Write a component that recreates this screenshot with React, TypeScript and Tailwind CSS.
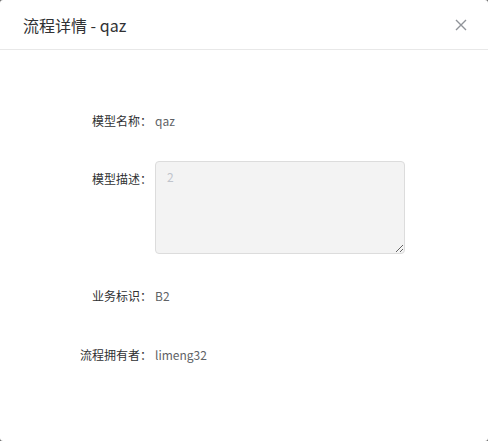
const FONT = '"Microsoft YaHei", "Noto Sans CJK SC", "Noto Sans", sans-serif'

const rows = [
  { label: '模型名称：', value: 'qaz' },
  { label: '业务标识：', value: 'B2' },
  { label: '流程拥有者：', value: 'limeng32' },
]

const CloseIcon = () => (
  <svg width="12" height="12" viewBox="0 0 12 12" fill="none">
    <path d="M1 1L11 11M11 1L1 11" stroke="#909399" strokeWidth="1.4" />
  </svg>
)

export default function App() {
  return (
    <div className="h-[441px] w-[488px] bg-[#6b6b6b]" style={{ fontFamily: FONT }}>
      <div className="flex h-full w-full flex-col rounded-[3px] bg-white">
        <div className="flex h-[50px] shrink-0 items-center justify-between border-b border-[#e8e8e8] pl-[23px] pr-[17px]">
          <span className="text-[16px] leading-6 text-[#303133]">流程详情 - qaz</span>
          <button className="flex h-5 w-5 items-center justify-center">
            <CloseIcon />
          </button>
        </div>

        <div className="flex flex-col pt-[61px] text-[12px] leading-5">
          <div className="flex">
            <div className="w-[152px] shrink-0 text-right text-[#303133]">{rows[0].label}</div>
            <div className="ml-[3px] text-[#606266]">{rows[0].value}</div>
          </div>

          <div className="mt-[30px] flex">
            <div className="w-[152px] shrink-0 pt-[8px] text-right text-[#303133]">模型描述：</div>
            <textarea
              readOnly
              value="2"
              className="ml-[3px] h-[93px] w-[250px] resize rounded-[4px] border border-[#dcdcdc] bg-[#f3f3f3] px-[11px] py-[5px] text-[12px] leading-5 text-[#c0c4cc] outline-none"
            />
          </div>

          <div className="mt-[32px] flex">
            <div className="w-[152px] shrink-0 text-right text-[#303133]">{rows[1].label}</div>
            <div className="ml-[3px] text-[#606266]">{rows[1].value}</div>
          </div>

          <div className="mt-[39px] flex">
            <div className="w-[152px] shrink-0 text-right text-[#303133]">{rows[2].label}</div>
            <div className="ml-[3px] text-[#606266]">{rows[2].value}</div>
          </div>
        </div>
      </div>
    </div>
  )
}
